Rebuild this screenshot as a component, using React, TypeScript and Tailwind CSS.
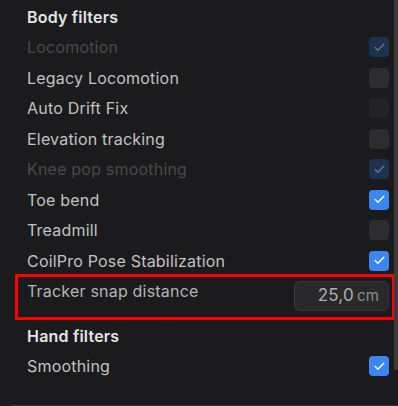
import { Check } from 'lucide-react';

type Row = { label: string; checked: boolean; disabled?: boolean; dimBox?: boolean };

const bodyFilters: Row[] = [
  { label: 'Locomotion', checked: true, disabled: true },
  { label: 'Legacy Locomotion', checked: false },
  { label: 'Auto Drift Fix', checked: false, dimBox: true },
  { label: 'Elevation tracking', checked: false },
  { label: 'Knee pop smoothing', checked: true, disabled: true },
  { label: 'Toe bend', checked: true },
  { label: 'Treadmill', checked: false },
  { label: 'CoilPro Pose Stabilization', checked: true },
];

function Box({ checked, disabled, dim }: { checked: boolean; disabled?: boolean; dim?: boolean }) {
  let cls = 'bg-[#2d2d30]';
  if (checked && disabled) cls = 'bg-[#1d3150]';
  else if (checked) cls = 'bg-[#3b87f2]';
  else if (disabled || dim) cls = 'bg-[#232325]';
  return (
    <span className={`flex h-5 w-5 items-center justify-center rounded-[4px] ${cls}`}>
      {checked && (
        <Check
          size={13}
          strokeWidth={2.5}
          className={disabled ? 'text-[#6b7687]' : 'text-white'}
        />
      )}
    </span>
  );
}

function ToggleRow({ row }: { row: Row }) {
  return (
    <div className="flex h-[30.5px] items-center justify-between">
      <span className={row.disabled ? 'text-[#4a4a4c]' : 'text-[#c2c2c4]'}>{row.label}</span>
      <Box checked={row.checked} disabled={row.disabled} dim={row.dimBox} />
    </div>
  );
}

export default function App() {
  return (
    <div
      className="relative h-[406px] w-[398px] overflow-hidden bg-[#1b1b1d] text-[16px] tracking-[0.2px]"
      style={{ fontFamily: 'Inter, "Noto Sans", sans-serif' }}
    >
      <div className="pl-[27px] pr-[9px] pt-[2px]">
        <div className="flex h-[30px] items-center font-semibold text-[#e4e4e6]">Body filters</div>
        {bodyFilters.map(r => (
          <ToggleRow key={r.label} row={r} />
        ))}

        <div className="relative flex h-[45px] items-start justify-between">
          <span className="flex h-[30px] items-center text-[#b4b4b6]">Tracker snap distance</span>
          <div className="mt-[5px] flex h-[30px] w-[95px] items-center justify-end gap-[3px] rounded-[6px] border border-[#39393b] bg-[#29292b] pr-[9px]">
            <span className="text-[17px] text-[#aeaeb0]">25,0</span>
            <span className="text-[15px] text-[#8e8e90]">cm</span>
          </div>
          <span className="pointer-events-none absolute top-[-2px] left-[-12px] right-[-6px] h-[46px] border-[3px] border-[#ff0000]" />
        </div>

        <div className="flex h-[30px] items-center font-semibold text-[#e4e4e6]">Hand filters</div>
        <ToggleRow row={{ label: 'Smoothing', checked: true }} />
      </div>

      <div className="absolute right-0 top-0 h-[370px] w-[4px] rounded-b-[2px] bg-[#3c3c3e]" />
      <div className="absolute bottom-0 left-[11px] right-0 h-px bg-[#3a3a3c]" />
    </div>
  );
}
